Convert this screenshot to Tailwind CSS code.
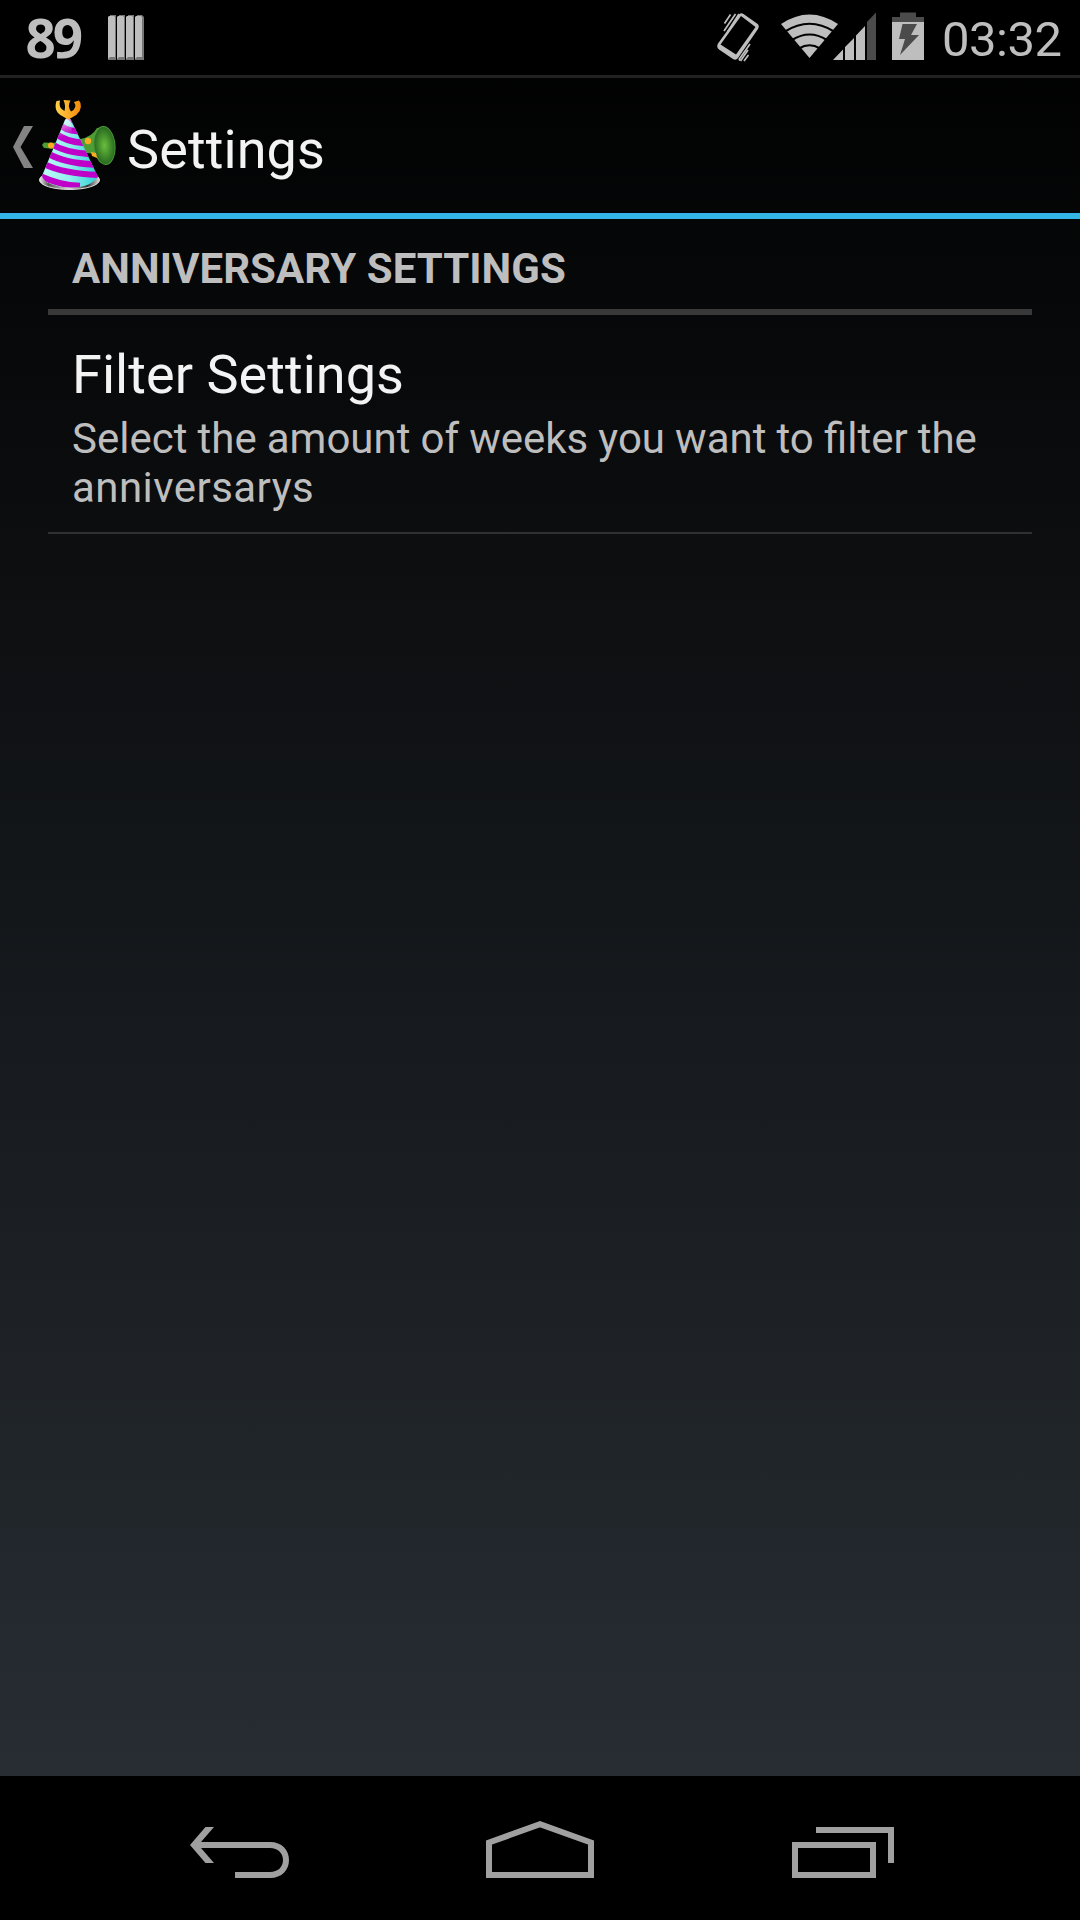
<!DOCTYPE html>
<html lang="en">
<head>
<meta charset="utf-8">
<title>Settings</title>
<script src="https://cdn.jsdelivr.net/npm/@tailwindcss/browser@4"></script>
</head>
<body class="bg-black">
<div class="flex h-[1920px] w-[1080px] flex-col overflow-hidden font-['Roboto',sans-serif] text-[#f3f3f3]">
  <div class="flex min-h-0 flex-1 flex-col bg-[linear-gradient(to_bottom,#000,#272d33)]">
    <!-- Status bar -->
    <div class="flex h-[78px] shrink-0 items-center justify-between border-b-[3px] border-[#212121] bg-black text-[#bebebe]">
      <div class="flex items-center pl-[25.5px]">
        <span class="w-[82.5px] font-['Noto_Sans',sans-serif] text-[53px] leading-[75px] font-bold tracking-[-3px]">89</span>
        <svg class="h-[46px] w-[36px]" viewBox="0 0 36 46">
          <g fill="#777"><path d="M2 0h6v45H0v-3zM11 0h6v45H9v-3zM20 0h6v45h-8v-3zM29 0h5l2 2v43h-9v-3z"/></g>
          <g fill="#bebebe"><path d="M0 2l1-1h5l1 1v40H2l-2 2zM9 2l1-1h5l1 1v40h-5l-2 2zM18 2l1-1h5l1 1v40h-5l-2 2zM27 2l1-1h5l1 1v40h-5l-2 2z"/></g>
        </svg>
      </div>
      <div class="flex items-center">
        <svg class="h-[75px] w-[224px]" viewBox="700 0 224 75">
          <path fill="#bebebe" fill-rule="evenodd" d="M739 14.500Q741 12.500 743.500 14L757 23.500Q760 25.500 758 29L738 58Q736 61 733 59L719 49.500Q716 47 718 43.500ZM741 16L720.500 44.500L736 54.500L755.500 27Z"/>
          <path stroke="#bebebe" stroke-width="1.700" fill="none" d="M724.500 23.500L730.500 14.500M724 31L735.500 14M727.500 32L739 14M739 59.500L750 44M739 60.500L740 59M740.500 61L748 50M744 61L748.500 55"/>
          <path fill="#bebebe" d="M781 24Q809.500 5 838 24L809.500 58Z"/>
          <g fill="none" stroke="#000" stroke-width="2.200"><path d="M785 31.500Q809.500 16 834 31.500M792 40Q809.500 29 827 40M799 48.500Q809.500 42 820 48.500"/></g>
          <path fill="#bebebe" d="M833 60L843 49.500V60ZM845 47L854 38V60H845ZM856 35.500L865 26V60H856Z"/>
          <path fill="#4b4b4b" d="M867 22L876 12.500V60H867ZM892 22V17H900V12.500H916V17H924V22Z"/>
          <path fill="#bebebe" d="M892 22H924V60H892Z"/>
          <path fill="#4b4b4b" d="M902.500 24H917L911 35H919L900 55L905 39H899Z"/>
        </svg>
        <span class="w-[156px] pt-[3px] pl-[18px] text-[49px] leading-[69px] tracking-[-0.5px]">03:32</span>
      </div>
    </div>
    <!-- Action bar -->
    <header class="flex h-[141px] shrink-0 items-center border-b-[6px] border-[#33b5e5]">
      <svg class="h-[135px] w-[126px]" viewBox="0 78 126 135">
        <defs>
          <linearGradient id="gold" x2="1"><stop stop-color="#ffd04a"/><stop offset="1" stop-color="#f58a08"/></linearGradient>
          <linearGradient id="cyan" x2="1"><stop stop-color="#c4fafa"/><stop offset=".5" stop-color="#94eeee"/><stop offset="1" stop-color="#25cfd2"/></linearGradient>
          <linearGradient id="shine" gradientUnits="userSpaceOnUse" x1="60" y1="118" x2="66" y2="136"><stop stop-color="#fff" stop-opacity=".75"/><stop offset="1" stop-color="#fff" stop-opacity="0"/></linearGradient>
          <radialGradient id="green"><stop stop-color="#69be3d"/><stop offset="1" stop-color="#27691f"/></radialGradient>
          <linearGradient id="brim" x2="1"><stop stop-color="#eee"/><stop offset=".15" stop-color="#555"/><stop offset=".5" stop-color="#ddd"/><stop offset=".8" stop-color="#333"/><stop offset="1" stop-color="#ddd"/></linearGradient>
          <clipPath id="cone"><path d="M65 120Q68 116 71 120L98 177Q92 184 84 186Q68 190 51 184Q43 181 42 176Z"/></clipPath>
        </defs>
        <path fill="#838383" d="M24 126H33L20.500 147L33 168H24L13 147Z"/>
        <path fill="#4e9e34" d="M42 145L44 142.500Q64 144 80 139Q92 137 97 128L105 127L107 164L98 156Q90 152 80 153Q60 149 44 148Z"/>
        <ellipse cx="104.500" cy="145.500" rx="10.500" ry="19" fill="url(#green)" stroke="#4a963a" stroke-width="1" transform="rotate(-5 104.500 145.500)"/>
        <g fill="#fbab20"><circle cx="88" cy="141" r="3.200"/><circle cx="51" cy="145.500" r="3"/><path d="M91 152L96 153L97 158L92 156Z"/></g>
        <ellipse cx="69.500" cy="180" rx="30" ry="9.500" fill="url(#brim)" stroke="#ddd" stroke-width="1"/>
        <g clip-path="url(#cone)">
          <path fill="url(#cyan)" d="M38 114H100V192H38Z"/>
          <g fill="none" stroke="#c000c8" stroke-width="6.300">
            <path d="M67 115L76 122M58 123Q66 132 80 131M55 133Q66 142 84 143M50 143Q64 152.500 90 154M48 153.500Q64 163 94 164.500M44 164Q64 174 100 175M38 175Q58 185 80 186"/>
          </g>
          <path fill="url(#shine)" d="M66 116L56 140H72L71 116Z"/>
        </g>
        <path fill="url(#gold)" d="M56.500 101Q53 112 63 116.500L68 119.500L72 117.500Q83 112 80.500 103L79 100.500L74 102Q78 108 71 111.500Q67 106 70.500 100.500L63.500 100Q66 106 64.500 111Q58 108 60 100.500Z"/>
      </svg>
      <h1 class="pt-[8px] pl-px text-[54px] leading-[64px] tracking-[0.1px]">Settings</h1>
    </header>
    <!-- Preferences -->
    <main class="flex flex-col px-[48px]">
      <h2 class="h-[96px] border-b-[6px] border-[#393939] pt-[5px] pl-[24px] text-[42px] leading-[90px] font-bold tracking-[0.05px] whitespace-nowrap text-[#bebebe]">ANNIVERSARY SETTINGS</h2>
      <section class="h-[219px] border-b-2 border-[#303133] pt-[28px] pl-[24px]">
        <h3 class="text-[54px] leading-[63px] tracking-[0.05px]">Filter Settings</h3>
        <p class="mt-[8px] text-[42px] leading-[49px] whitespace-nowrap text-[#bebebe] [word-spacing:-0.33px]">Select the amount of weeks you want to filter the<br><span class="tracking-[0.45px]">anniversarys</span></p>
      </section>
    </main>
  </div>
  <!-- Navigation bar -->
  <nav class="flex h-[144px] shrink-0 items-center bg-black px-[87px] text-[#a0a0a0]">
    <svg class="h-[144px] w-[303px]" viewBox="87 1776 303 144">
      <path fill="currentColor" d="M205.500 1827H214L201 1842H270C282 1842 289 1850 289 1860S282 1878 270 1878H235V1872H270C278 1872 283 1867 283 1860S278 1848 270 1848H201L214 1863H205.500L190 1845Z"/>
    </svg>
    <svg class="h-[144px] w-[300px]" viewBox="390 1776 300 144">
      <path fill="none" stroke="currentColor" stroke-width="6" d="M489 1875V1842.500L540 1824.200L591 1842.500V1875Z"/>
    </svg>
    <svg class="h-[144px] w-[303px]" viewBox="690 1776 303 144">
      <path fill="none" stroke="currentColor" stroke-width="6" d="M795 1845H873V1875H795ZM816 1830H891V1863"/>
    </svg>
  </nav>
</div>
</body>
</html>
